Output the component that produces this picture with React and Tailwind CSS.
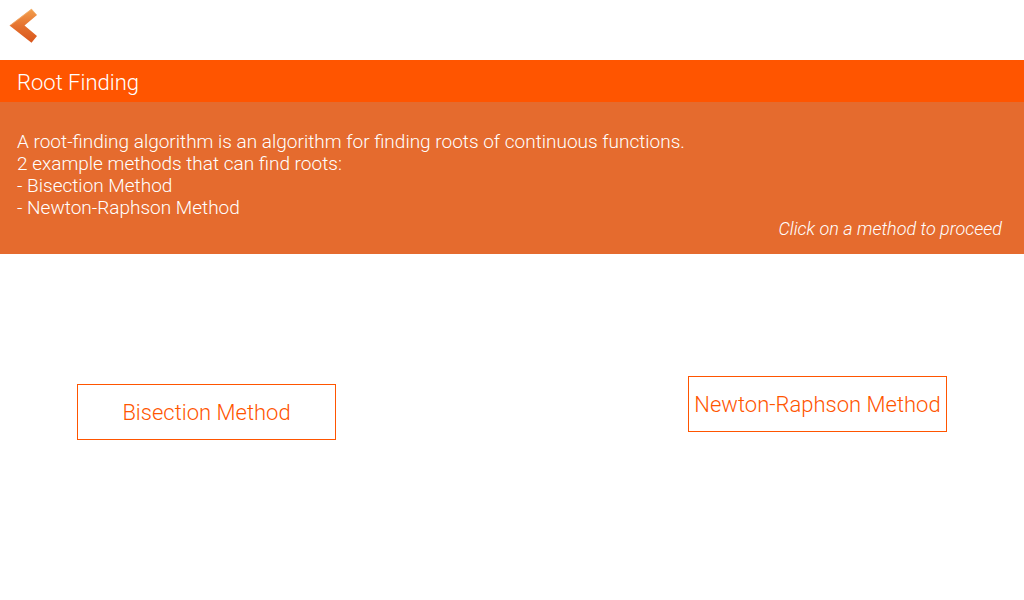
export default function App() {
  return (
    <main className="min-h-screen bg-white font-['Roboto',sans-serif] font-light text-white antialiased">
      <nav className="flex h-15 items-start px-2 pt-2">
        <button type="button" aria-label="Back" className="block">
          <svg width="32" height="36" viewBox="0 0 32 36">
            <defs>
              <linearGradient id="arrow" x1="0" y1="0" x2="0" y2="1">
                <stop offset="0" stopColor="#f3a04e" />
                <stop offset="0.5" stopColor="#e5722f" />
                <stop offset="1" stopColor="#d9561c" />
              </linearGradient>
            </defs>
            <path d="M1.5 17.5 23.5 0.7 29 7 16.5 17.500 29 28 23.5 34.8Z" fill="url(#arrow)" />
            <path d="M2.5 17.3 23.5 1.300 28.500 6.800" fill="none" stroke="#f3c48a" strokeOpacity="0.5" />
          </svg>
        </button>
      </nav>
      <header className="bg-[#ff5500] px-[17px] pt-1.5 pb-0.5">
        <h1 className="text-[22px] leading-[34px]">Root Finding</h1>
      </header>
      <section className="bg-[#e56b2e] px-[17px] pt-[29px] pb-4">
        <p className="text-[19px] leading-[22px]">A root-finding algorithm is an algorithm for finding roots of continuous functions.</p>
        <p className="text-[19px] leading-[22px]">2 example methods that can find roots:</p>
        <ul className="text-[19px] leading-[22px]">
          <li>- Bisection Method</li>
          <li>- Newton-Raphson Method</li>
        </ul>
        <p className="pr-[5px] text-right text-[18px] leading-[19px] italic">Click on a method to proceed</p>
      </section>
      <div className="flex items-start justify-between px-[77px] pt-[122px] text-[22px] text-[#ff5500]">
        <button type="button" className="mt-2 h-14 w-[259px] border border-[#ff5500]">Bisection Method</button>
        <button type="button" className="h-14 w-[259px] border border-[#ff5500]">Newton-Raphson Method</button>
      </div>
    </main>
  );
}
